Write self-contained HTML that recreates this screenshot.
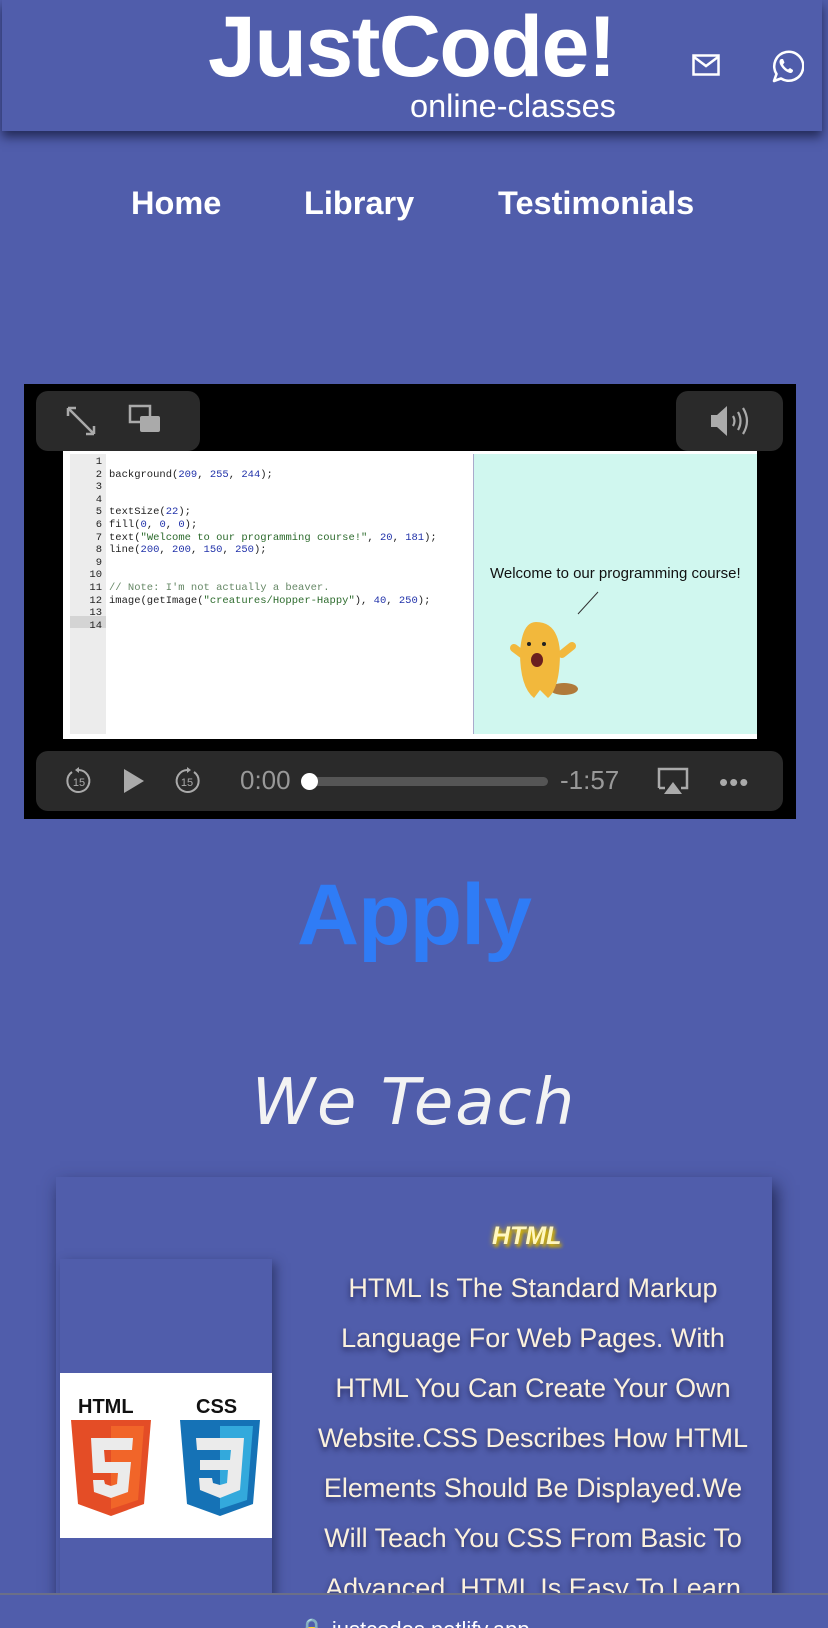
<!DOCTYPE html>
<html><head><meta charset="utf-8"><style>
*{margin:0;padding:0;box-sizing:border-box}
html,body{width:828px;height:1628px;overflow:hidden;background:#505dab;font-family:"Liberation Sans",sans-serif;position:relative}
.hdr{position:absolute;left:2px;top:0;width:820px;height:131px;background:#505dab;box-shadow:0 6px 10px rgba(20,25,60,.75)}
.abs{position:absolute}
.title{left:208px;top:-2px;font-size:86px;font-weight:bold;color:#fff;letter-spacing:-1.5px}
.sub{left:410px;top:88px;font-size:32.5px;color:#fff}
.nav{top:185px;font-size:32.5px;font-weight:bold;color:#fff}
.video{left:24px;top:384px;width:772px;height:435px;background:#000}
.pill{background:#2a2a2a;border-radius:12px}
.code{font-family:"Liberation Mono",monospace;font-size:10.5px;line-height:12.6px;color:#222}
.n{color:#2233aa}.s{color:#2d6b2d}.c{color:#668866}
.apply{left:0;width:828px;text-align:center;top:866px;font-size:86px;font-weight:bold;color:#2f7cf6;letter-spacing:-1px}
.teach{left:0;width:828px;text-align:center;top:1066px;font-size:64px;font-style:italic;color:#f3f3f3;letter-spacing:2px;font-family:"DejaVu Sans",sans-serif}
.card{left:56px;top:1177px;width:716px;height:500px;background:#505dab;box-shadow:4px 8px 16px rgba(20,25,60,.8)}
.para{left:310px;width:446px;top:1263px;text-align:center;font-size:27px;line-height:50px;color:#fbf1dd;text-shadow:0 3px 6px rgba(20,20,60,.7)}
.foot{left:0;top:1593px;width:828px;height:35px;background:#505dab;border-top:2px solid #6b6f88}
</style></head><body>
<div class="hdr"></div>
<div class="abs title">JustCode!</div>
<div class="abs sub">online-classes</div>
<svg class="abs" style="left:692px;top:54px" width="28" height="22" viewBox="0 0 28 22"><rect x="1.5" y="1.5" width="25" height="19" fill="none" stroke="#fff" stroke-width="2.5"/><path d="M2 3 L14 12 L26 3" fill="none" stroke="#fff" stroke-width="2.5"/></svg>
<svg class="abs" style="left:768px;top:48px" width="36" height="36" viewBox="0 0 36 36"><path d="M6 33 L8.5 26 A14.5 14.5 0 1 1 13 30.5 Z" fill="none" stroke="#fff" stroke-width="2.6" stroke-linejoin="round"/><path d="M13 11 c-2 1 -2 4 0 7 c2 3 5 6 9 7 c2 0 3-1 3-3 l-3-2 l-2 1.5 c-2-1-4-3-5-5 l1.5-2 l-1.5-3.5 z" fill="#fff"/></svg>
<div class="abs nav" style="left:131px">Home</div>
<div class="abs nav" style="left:304px">Library</div>
<div class="abs nav" style="left:498px">Testimonials</div>

<div class="abs video">
  <div class="abs" style="left:39px;top:67px;width:694px;height:288px;background:#fff"></div>
  <div class="abs" style="left:46px;top:70px;width:36px;height:280px;background:#ececec"></div>
  <div class="abs" style="left:46px;top:232px;width:36px;height:12px;background:#d4d4d4"></div>
  <div class="abs" style="left:449px;top:70px;width:284px;height:280px;background:#d0f7ef;border-left:1px solid #aac"></div>
  <div class="abs code" style="left:50px;top:72px;width:28px;text-align:right">1<br>2<br>3<br>4<br>5<br>6<br>7<br>8<br>9<br>10<br>11<br>12<br>13<br>14</div>
  <div class="abs code" style="left:85px;top:72px;white-space:pre">
background(<span class="n">209</span>, <span class="n">255</span>, <span class="n">244</span>);


textSize(<span class="n">22</span>);
fill(<span class="n">0</span>, <span class="n">0</span>, <span class="n">0</span>);
text(<span class="s">"Welcome to our programming course!"</span>, <span class="n">20</span>, <span class="n">181</span>);
line(<span class="n">200</span>, <span class="n">200</span>, <span class="n">150</span>, <span class="n">250</span>);


<span class="c">// Note: I'm not actually a beaver.</span>
image(getImage(<span class="s">"creatures/Hopper-Happy"</span>), <span class="n">40</span>, <span class="n">250</span>);</div>
  <div class="abs" style="left:466px;top:181px;font-size:15px;color:#111">Welcome to our programming course!</div>
  <svg class="abs" style="left:470px;top:200px" width="140" height="130"><line x1="104" y1="8" x2="84" y2="30" stroke="#333" stroke-width="1"/><ellipse cx="70" cy="105" rx="14" ry="6" fill="#b07a3a"/><path d="M42 38 q-14 0-16 30 q0 35 14 46 l6-8 l8 8 q12-10 12-46 q-2-30-24-30z" fill="#f2b83c"/><path d="M28 70 l-8-6 M68 70 l10-8" stroke="#f2b83c" stroke-width="8" stroke-linecap="round"/><circle cx="35" cy="60" r="2" fill="#222"/><circle cx="50" cy="60" r="2" fill="#222"/><ellipse cx="43" cy="76" rx="6" ry="7" fill="#6b1f1f"/></svg>
  <div class="abs pill" style="left:12px;top:7px;width:164px;height:60px"></div>
  <svg class="abs" style="left:40px;top:20px" width="34" height="34" viewBox="0 0 34 34" fill="none" stroke="#aaa" stroke-width="2.5"><path d="M4 4 L30 30 M4 4 h8 M4 4 v8 M30 30 h-8 M30 30 v-8"/></svg>
  <svg class="abs" style="left:104px;top:20px" width="34" height="34" viewBox="0 0 34 34"><rect x="2" y="2" width="20" height="16" fill="none" stroke="#aaa" stroke-width="2.5"/><rect x="12" y="12" width="20" height="16" rx="2" fill="#aaa"/></svg>
  <div class="abs pill" style="left:652px;top:7px;width:107px;height:60px"></div>
  <svg class="abs" style="left:683px;top:20px" width="50" height="34" viewBox="0 0 50 34"><path d="M4 11 h6 l10-9 v30 l-10-9 h-6z" fill="#aaa"/><path d="M26 12 q3 5 0 10 M31 8 q5 9 0 18 M36 4 q8 13 0 26" fill="none" stroke="#aaa" stroke-width="2.2"/></svg>
  <div class="abs pill" style="left:12px;top:367px;width:747px;height:60px"></div>
  <svg class="abs" style="left:40px;top:382px" width="30" height="30" viewBox="0 0 30 30"><path d="M8 6 A11 11 0 1 0 15 4" fill="none" stroke="#aaa" stroke-width="2"/><path d="M15 1 l-4 3 4 3z" fill="#aaa"/><text x="15" y="20" text-anchor="middle" font-size="11" fill="#aaa" font-family="Liberation Sans">15</text></svg>
  <svg class="abs" style="left:98px;top:383px" width="24" height="28"><path d="M2 2 L22 14 L2 26z" fill="#aaa"/></svg>
  <svg class="abs" style="left:148px;top:382px" width="30" height="30" viewBox="0 0 30 30"><path d="M22 6 A11 11 0 1 1 15 4" fill="none" stroke="#aaa" stroke-width="2"/><path d="M15 1 l4 3 -4 3z" fill="#aaa"/><text x="15" y="20" text-anchor="middle" font-size="11" fill="#aaa" font-family="Liberation Sans">15</text></svg>
  <div class="abs" style="left:216px;top:381px;font-size:26px;color:#999">0:00</div>
  <div class="abs" style="left:280px;top:393px;width:244px;height:9px;border-radius:5px;background:#555"></div>
  <div class="abs" style="left:277px;top:389px;width:17px;height:17px;border-radius:50%;background:#fff"></div>
  <div class="abs" style="left:536px;top:381px;font-size:26px;color:#999">-1:57</div>
  <svg class="abs" style="left:632px;top:382px" width="34" height="30"><path d="M3 22 V3 H31 V22 H25" fill="none" stroke="#aaa" stroke-width="2.5"/><path d="M3 22 H9" stroke="#aaa" stroke-width="2.5"/><path d="M17 16 L26 28 H8z" fill="#aaa"/></svg>
  <div class="abs" style="left:695px;top:383px;font-size:26px;color:#aaa;letter-spacing:1px">•••</div>
</div>

<div class="abs apply">Apply</div>
<div class="abs teach">We Teach</div>

<div class="abs card"></div>
<div class="abs" style="left:60px;top:1259px;width:212px;height:400px;background:#505dab;box-shadow:4px 4px 10px rgba(20,25,60,.5)"></div>
<div class="abs" style="left:60px;top:1373px;width:212px;height:165px;background:#fff"></div>
<div class="abs" style="left:78px;top:1396px;font-size:20px;font-weight:900;color:#111">HTML</div>
<div class="abs" style="left:196px;top:1396px;font-size:20px;font-weight:900;color:#111">CSS</div>
<svg class="abs" style="left:71px;top:1420px" width="82" height="100" viewBox="0 0 82 100"><path d="M0 0 H80 L73 84 L40 96 L7 84z" fill="#e44d26"/><path d="M40 6 H73 L67 80 L40 89z" fill="#f16529"/><path d="M20 18 H62 L61 30 H33 L34 42 H60 L57 72 L40 78 L23 72 L22 60 H33 L34 64 L40 66 L46 64 L47 53 H22z" fill="#ebebeb"/></svg>
<svg class="abs" style="left:180px;top:1420px" width="82" height="100" viewBox="0 0 82 100"><path d="M0 0 H80 L73 84 L40 96 L7 84z" fill="#1572b6"/><path d="M40 6 H73 L67 80 L40 89z" fill="#33a9dc"/><path d="M16 18 H64 L60 70 L40 78 L20 70 L19 58 H32 L33 63 L40 65 L47 63 L48 50 H20 V40 H50 L51 30 H17z" fill="#ebebeb"/></svg>
<div class="abs" style="left:492px;top:1222px;font-size:25px;font-style:italic;font-weight:bold;color:#fff7c0;text-shadow:0 0 6px #e8c400,2px 3px 3px #c9a800">HTML</div>
<div class="abs para">HTML Is The Standard Markup Language For Web Pages. With HTML You Can Create Your Own Website.CSS Describes How HTML Elements Should Be Displayed.We Will Teach You CSS From Basic To Advanced. HTML Is Easy To Learn</div>
<div class="abs foot"><div style="text-align:center;color:#fff;font-size:22px;margin-top:22px">🔒 justcodes.netlify.app</div></div>
</body></html>
